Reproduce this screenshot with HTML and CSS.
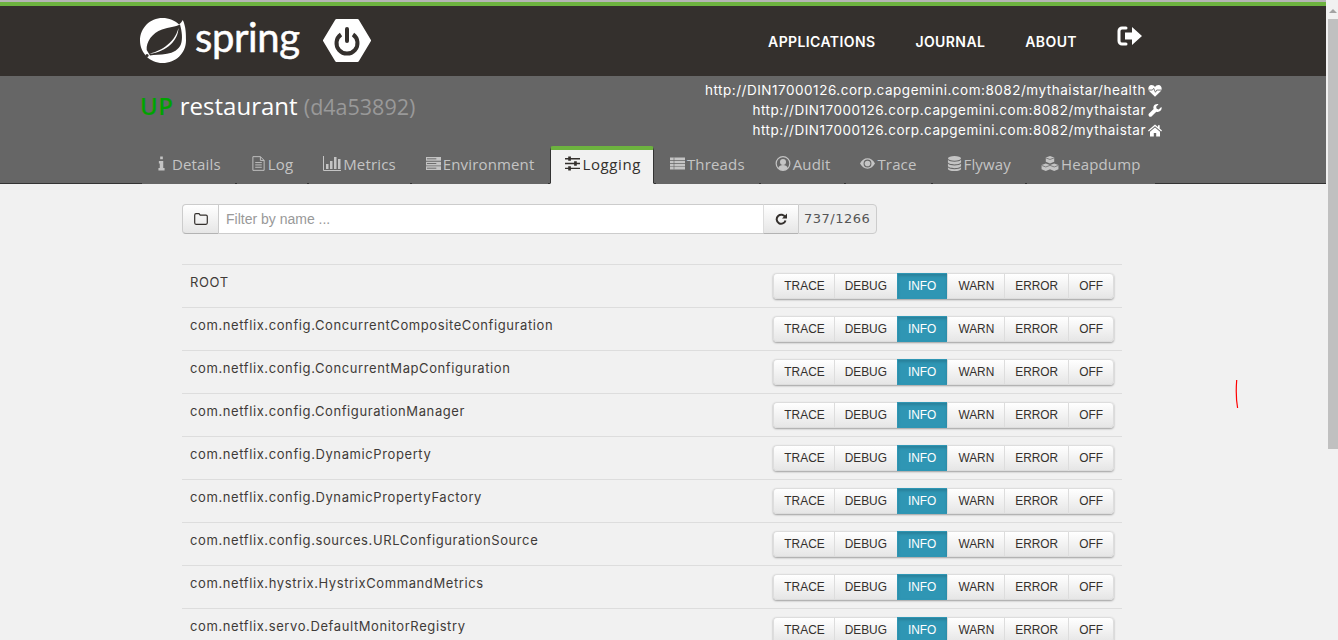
FILE: index.html
```html
<!DOCTYPE html>
<html lang="en">
<head>
  <meta charset="UTF-8">
  <meta name="viewport" content="width=device-width, initial-scale=1.0">
  <title>Spring Boot Admin</title>
  <link rel="stylesheet" href="styles.css">
</head>
<body>
  <svg class="icon-defs" width="0" height="0">
    <symbol id="i-signout" viewBox="0 0 25 20"><path d="M9 2H5a3 3 0 0 0-3 3v10a3 3 0 0 0 3 3h4" fill="none" stroke="currentColor" stroke-width="3" stroke-linecap="round"/><path d="M8 6.500h7V1l10 9-10 9v-5.500H8z" fill="currentColor"/></symbol>
    <symbol id="i-heart" viewBox="0 0 16 14"><path d="M8 14 1.500 7.800C-.5 5.500.2 1 4 .8c1.800 0 3.200 1 4 2.200C8.800 1.800 10.200.8 12 .8c3.800.2 4.500 4.700 2.500 7z" fill="currentColor"/><path d="M1 6.500h4l1.500-2 2 4.500L10 6.500h5" fill="none" stroke="#666" stroke-width="1"/></symbol>
    <symbol id="i-wrench" viewBox="0 0 14 14"><path d="M13.700 3.200 11 5.800 8.800 5 8.200 3l2.600-2.700C8.800-.4 6.300.5 5.500 2.500c-.4 1-.3 2 0 2.800L.6 10.200c-.8.800-.8 2 0 2.900.9.800 2.100.8 2.900 0l4.900-4.800c2.800 1 6-1 5.800-4.200 0-.3-.2-.6-.5-.9z" fill="currentColor"/></symbol>
    <symbol id="i-home" viewBox="0 0 14 12"><path d="M7 0 0 6l.8.900L7 1.700l6.200 5.200L14 6l-2.300-2V.8H10v1.700zM2 7.200V12h3.800V8.500h2.400V12H12V7.200L7 3z" fill="currentColor"/></symbol>
    <symbol id="i-info" viewBox="0 0 8 16"><path d="M2.500 0h3v3h-3zM1 5h5v8h1.500v3h-7v-3H2V8H1z" fill="currentColor"/></symbol>
    <symbol id="i-file" viewBox="0 0 14 16"><path d="M1 .7h8l4 4v10.600H1zM9 .7v4h4" fill="none" stroke="currentColor"/><path d="M3.500 7h7M3.500 9.500h7M3.500 12h7" stroke="currentColor"/></symbol>
    <symbol id="i-chart" viewBox="0 0 18 15"><path d="M.5 0v14.500H18" fill="none" stroke="currentColor"/><path d="M3 8h2.500v5H3zM7 5h2.500v8H7zM11 1h2.500v12H11zM15 3h2.500v10H15z" fill="currentColor"/></symbol>
    <symbol id="i-server" viewBox="0 0 16 14"><path d="M0 0h16v4H0zM0 5h16v4H0zM0 10h16v4H0z" fill="currentColor"/><path d="M1 2h10M1 7h10M1 12h10" stroke="#666"/></symbol>
    <symbol id="i-sliders" viewBox="0 0 14 14"><path d="M0 2.500h14M0 7h14M0 11.500h14" stroke="currentColor" stroke-width="1.300"/><path d="M3 0.500h2.500v4H3zM8.500 5h2.500v4H8.500zM3 9.500h2.500v4H3z" fill="currentColor"/></symbol>
    <symbol id="i-list" viewBox="0 0 15 12"><path d="M0 0h15v2.500H0zM0 3.200h15v2.500H0zM0 6.400h15v2.500H0zM0 9.500h15V12H0z" fill="currentColor"/><path d="M4 0v12" stroke="#666" stroke-width=".6"/></symbol>
    <symbol id="i-user" viewBox="0 0 16 16"><circle cx="8" cy="8" r="7.300" fill="none" stroke="currentColor" stroke-width="1.300"/><circle cx="8" cy="6.300" r="3.200" fill="currentColor"/><path d="M2.800 13c.8-2.600 2.800-3.500 5.200-3.500s4.400.9 5.200 3.500A7 7 0 0 1 8 15.200 7 7 0 0 1 2.800 13z" fill="currentColor"/></symbol>
    <symbol id="i-eye" viewBox="0 0 16 11"><path d="M8 0C4.500 0 1.800 2.200 0 5.500 1.800 8.800 4.500 11 8 11s6.200-2.200 8-5.500C14.200 2.200 11.500 0 8 0zm0 9.700a4.200 4.200 0 1 1 0-8.400 4.200 4.200 0 0 1 0 8.400z" fill="currentColor"/><circle cx="8" cy="5.500" r="3" fill="currentColor"/></symbol>
    <symbol id="i-db" viewBox="0 0 14 16"><ellipse cx="7" cy="2.500" rx="7" ry="2.500" fill="currentColor"/><path d="M0 4v2.500C0 8 3 9 7 9s7-1 7-2.500V4c-1 1.500-4 2-7 2S1 5.500 0 4zM0 8v2.500C0 12 3 13 7 13s7-1 7-2.500V8c-1 1.500-4 2-7 2S1 9.500 0 8zM0 12v1.500C0 15 3 16 7 16s7-1 7-2.500V12c-1 1.500-4 2-7 2s-6-.5-7-2z" fill="currentColor"/></symbol>
    <symbol id="i-cubes" viewBox="0 0 18 16"><path d="M9 0l4.500 1.700v4.500L9 8 4.500 6.200V1.700zM4.500 8 9 9.700v4.500L4.500 16 0 14.200V9.700zM13.500 8 18 9.700v4.500L13.500 16 9 14.200V9.700z" fill="currentColor"/><path d="M4.500 2 9 3.700l4.500-1.700M0 10l4.500 1.700L9 10l4.500 1.700L18 10" fill="none" stroke="#666" stroke-width=".8"/></symbol>
    <symbol id="i-folder" viewBox="0 0 14 12"><path d="M.7 2.200c0-.8.5-1.500 1.300-1.500h3l1.200 1.500H12c.8 0 1.300.6 1.300 1.300v6.300c0 .8-.5 1.500-1.300 1.500H2c-.8 0-1.300-.7-1.300-1.500z" fill="none" stroke="currentColor" stroke-width="1.200"/></symbol>
    <symbol id="i-refresh" viewBox="0 0 12 12"><path d="M10.200 4.200A4.500 4.500 0 1 0 10.500 7.500" fill="none" stroke="currentColor" stroke-width="2"/><path d="M12 .5V5.500H7z" fill="currentColor"/></symbol>
  </svg>

  <div class="page">
    <div class="viewport">
      <header class="navbar">
        <div class="navbar-inner">
          <a class="brand" href="#">
            <svg class="spring-leaf" viewBox="0 0 46 46" width="46" height="46">
              <path d="M22.500 0C29 0 35 2.500 39 6.500c1.600-1.200 2.800-2.800 3.800-4.500C46 9 46 16 46 22.500 46 35 36 45 22.500 45 10 45 0 35 0 22.500S10 0 22.500 0z" fill="#fff"/>
              <path d="M6.700 32C6 24 12 15 22 11.500 29 9 35.500 9 40 6.500c2 7 2.800 14.500 1 19.500-2 5.500-8 9-14 9.800C20 37 14 36.500 10 37.500z" fill="#34302d"/>
              <path d="M9 36C18 33.500 34 27 38.500 10 38 22 28 33.500 9 36z" fill="#fff"/>
              <circle cx="7" cy="37.500" r="1.600" fill="#34302d"/>
            </svg>
            <span class="brand-name">spring</span>
            <svg class="boot-hex" viewBox="0 0 48 43" width="48" height="43">
              <path d="M13.500 1.500h21L46.500 21.500 34.500 41.500h-21L1.500 21.500z" fill="#fff" stroke="#fff" stroke-width="3" stroke-linejoin="round"/>
              <path d="M18 15.500a10.500 10.500 0 1 0 12 0" fill="none" stroke="#34302d" stroke-width="4"/>
              <path d="M24 10v12" stroke="#34302d" stroke-width="4" stroke-linecap="round"/>
            </svg>
          </a>
          <nav class="main-nav">
            <a href="#">APPLICATIONS</a>
            <a href="#">JOURNAL</a>
            <a href="#">ABOUT</a>
            <a class="logout" href="#"><svg class="logout-icon"><use href="#i-signout"/></svg></a>
          </nav>
        </div>
      </header>

      <section class="app-head">
        <div class="app-head-inner">
          <div class="app-info">
            <h1 class="app-title"><span class="status-up">UP</span> restaurant <small>(d4a53892)</small></h1>
            <ul class="app-urls">
              <li>http://DIN17000126.corp.capgemini.com:8082/mythaistar/health<svg class="url-icon"><use href="#i-heart"/></svg></li>
              <li>http://DIN17000126.corp.capgemini.com:8082/mythaistar<svg class="url-icon"><use href="#i-wrench"/></svg></li>
              <li>http://DIN17000126.corp.capgemini.com:8082/mythaistar<svg class="url-icon"><use href="#i-home"/></svg></li>
            </ul>
          </div>
          <ul class="tabs">
            <li class="tab tab-details"><svg class="tab-icon icon-info"><use href="#i-info"/></svg>Details</li>
            <li class="tab"><svg class="tab-icon"><use href="#i-file"/></svg>Log</li>
            <li class="tab"><svg class="tab-icon icon-wide"><use href="#i-chart"/></svg>Metrics</li>
            <li class="tab"><svg class="tab-icon"><use href="#i-server"/></svg>Environment</li>
            <li class="tab active"><svg class="tab-icon"><use href="#i-sliders"/></svg>Logging</li>
            <li class="tab"><svg class="tab-icon"><use href="#i-list"/></svg>Threads</li>
            <li class="tab"><svg class="tab-icon icon-user"><use href="#i-user"/></svg>Audit</li>
            <li class="tab"><svg class="tab-icon"><use href="#i-eye"/></svg>Trace</li>
            <li class="tab"><svg class="tab-icon"><use href="#i-db"/></svg>Flyway</li>
            <li class="tab"><svg class="tab-icon icon-wide"><use href="#i-cubes"/></svg>Heapdump</li>
          </ul>
        </div>
      </section>

      <main class="content">
        <div class="filter-bar">
          <button class="addon-btn folder-btn"><svg class="btn-icon"><use href="#i-folder"/></svg></button>
          <input class="filter-input" type="text" placeholder="Filter by name ...">
          <button class="addon-btn refresh-btn"><svg class="btn-icon"><use href="#i-refresh"/></svg></button>
          <span class="filter-count">737/1266</span>
        </div>

        <div class="logger-list">
          <div class="logger-row">
            <span class="logger-name">ROOT</span>
            <div class="btn-group"><button>TRACE</button><button>DEBUG</button><button class="on">INFO</button><button>WARN</button><button>ERROR</button><button>OFF</button></div>
          </div>
          <div class="logger-row">
            <span class="logger-name">com.netflix.config.ConcurrentCompositeConfiguration</span>
            <div class="btn-group"><button>TRACE</button><button>DEBUG</button><button class="on">INFO</button><button>WARN</button><button>ERROR</button><button>OFF</button></div>
          </div>
          <div class="logger-row">
            <span class="logger-name">com.netflix.config.ConcurrentMapConfiguration</span>
            <div class="btn-group"><button>TRACE</button><button>DEBUG</button><button class="on">INFO</button><button>WARN</button><button>ERROR</button><button>OFF</button></div>
          </div>
          <div class="logger-row">
            <span class="logger-name">com.netflix.config.ConfigurationManager</span>
            <div class="btn-group"><button>TRACE</button><button>DEBUG</button><button class="on">INFO</button><button>WARN</button><button>ERROR</button><button>OFF</button></div>
          </div>
          <div class="logger-row">
            <span class="logger-name">com.netflix.config.DynamicProperty</span>
            <div class="btn-group"><button>TRACE</button><button>DEBUG</button><button class="on">INFO</button><button>WARN</button><button>ERROR</button><button>OFF</button></div>
          </div>
          <div class="logger-row">
            <span class="logger-name">com.netflix.config.DynamicPropertyFactory</span>
            <div class="btn-group"><button>TRACE</button><button>DEBUG</button><button class="on">INFO</button><button>WARN</button><button>ERROR</button><button>OFF</button></div>
          </div>
          <div class="logger-row">
            <span class="logger-name">com.netflix.config.sources.URLConfigurationSource</span>
            <div class="btn-group"><button>TRACE</button><button>DEBUG</button><button class="on">INFO</button><button>WARN</button><button>ERROR</button><button>OFF</button></div>
          </div>
          <div class="logger-row">
            <span class="logger-name">com.netflix.hystrix.HystrixCommandMetrics</span>
            <div class="btn-group"><button>TRACE</button><button>DEBUG</button><button class="on">INFO</button><button>WARN</button><button>ERROR</button><button>OFF</button></div>
          </div>
          <div class="logger-row">
            <span class="logger-name">com.netflix.servo.DefaultMonitorRegistry</span>
            <div class="btn-group"><button>TRACE</button><button>DEBUG</button><button class="on">INFO</button><button>WARN</button><button>ERROR</button><button>OFF</button></div>
          </div>
        </div>

        <svg class="pen-mark" viewBox="0 0 4 30" width="4" height="30"><path d="M1.700 1C1 10 1 20 2.600 29" fill="none" stroke="#f00" stroke-width="1.200"/></svg>
      </main>
    </div>

    <div class="scrollbar">
      <div class="scroll-up"></div>
      <div class="scroll-thumb"></div>
    </div>
  </div>
</body>
</html>
```

FILE: styles.css
```css
* {
    box-sizing: border-box;
}

html, body {
    height: 100%;
    margin: 0;
    overflow: hidden;
}

body {
    background-color: #f1f1f1;
    color: #34302d;
    font-family: "Inter", "Liberation Sans", sans-serif;
}

a {
    color: inherit;
    text-decoration: none;
}

ul {
    list-style: none;
    margin: 0;
    padding: 0;
}

.icon-defs {
    position: absolute;
}

.page {
    display: flex;
    height: 640px;
}

.viewport {
    position: relative;
    width: 1326px;
    height: 640px;
    overflow: hidden;
    border-top: 2px solid #b5b5b5;
}

/* top bar */
.navbar {
    height: 74px;
    border-top: 4px solid #6db33f;
    background-color: #34302d;
}

.navbar-inner {
    display: flex;
    justify-content: space-between;
    width: 1022px;
    margin-left: 140px;
}

.brand {
    display: flex;
    align-items: flex-start;
    padding-top: 12px;
}

.brand-name {
    margin: -6px 0 0 9px;
    color: #fff;
    font-family: "Lato", sans-serif;
    font-size: 40px;
    line-height: 50px;
    letter-spacing: -0.4px;
    -webkit-text-stroke: 0.5px #fff;
}

.boot-hex {
    margin: 1px 0 0 23px;
}

.main-nav {
    display: flex;
    gap: 40px;
    margin-right: 20px;
    padding-top: 27px;
    color: #fff;
    font-size: 14px;
    font-weight: 600;
    line-height: 18px;
    letter-spacing: 0.4px;
}

.logout-icon {
    display: block;
    width: 25px;
    height: 20px;
    margin-top: -7px;
}

/* application header */
.app-head {
    height: 108px;
    border-bottom: 1px solid #333;
    background-color: #666;
}

.app-head-inner {
    width: 1022px;
    margin-left: 140px;
}

.app-info {
    display: flex;
    justify-content: space-between;
    height: 70px;
    padding-top: 4px;
}

.app-title {
    margin: 11px 0 0;
    color: #fff;
    font-family: "Open Sans", sans-serif;
    font-size: 24px;
    font-weight: 400;
    line-height: 30px;
}

.status-up {
    color: #00a300;
    font-weight: 600;
    letter-spacing: 0.5px;
}

.app-title small {
    color: #999;
    font-size: 21.5px;
}

.app-urls {
    color: #fff;
    font-size: 13.5px;
    line-height: 20px;
    letter-spacing: 0.52px;
    text-align: right;
}

.url-icon {
    display: inline-block;
    width: 14px;
    height: 13px;
    margin-left: 2px;
    vertical-align: -2px;
    color: #fff;
}

.tabs {
    display: flex;
    gap: 2px;
    height: 38px;
    color: #c4c4c4;
    font-family: "Open Sans", sans-serif;
    font-size: 15px;
    letter-spacing: 0.15px;
}

.tab {
    display: flex;
    align-items: center;
    height: 38px;
    padding: 0 14px 2px;
    border-bottom: 1px solid #666;
    white-space: nowrap;
}

.tab-details {
    margin-left: 2px;
    padding-left: 16px;
}

.tab.active {
    padding: 0 12px 6px 14px;
    border: 1px solid #333;
    border-top: 4px solid #6db33f;
    border-bottom: 1px solid #f1f1f1;
    border-radius: 3px 3px 0 0;
    background-color: #f1f1f1;
    color: #34302d;
    letter-spacing: 0.6px;
}

.tab-icon {
    flex: none;
    width: 15px;
    height: 15px;
    margin-right: 2px;
}

.tab-icon.icon-info {
    width: 7px;
    margin-right: 7px;
}

.tab-icon.icon-user {
    width: 16px;
}

.tab-icon.icon-wide {
    width: 18px;
}

/* content */
.content {
    width: 940px;
    margin-left: 182px;
    padding-top: 20px;
}

.filter-bar {
    display: flex;
    height: 30px;
}

.addon-btn {
    height: 30px;
    padding: 0;
    border: 1px solid #ccc;
    border-bottom-color: #b3b3b3;
    background-image: linear-gradient(#fff, #e6e6e6);
    color: #34302d;
}

.folder-btn {
    width: 37px;
    border-radius: 4px 0 0 4px;
}

.refresh-btn {
    width: 35px;
    border-left: 1px solid #ddd;
    border-right: 0;
}

.btn-icon {
    display: block;
    width: 14px;
    height: 12px;
    margin: 0 auto;
}

.filter-input {
    width: 544px;
    height: 30px;
    padding: 4px 7px;
    border: 1px solid #ccc;
    border-left: 0;
    border-right: 0;
    background-color: #fff;
    font-family: "Liberation Sans", sans-serif;
    font-size: 14px;
}

.filter-input::placeholder {
    color: #999;
}

.filter-count {
    width: 79px;
    height: 30px;
    padding: 0 5px;
    border: 1px solid #ccc;
    border-radius: 0 4px 4px 0;
    background-color: #eee;
    color: #555;
    font-family: "DejaVu Sans", sans-serif;
    font-size: 13px;
    line-height: 28px;
    letter-spacing: 0.5px;
}

.logger-list {
    margin-top: 30px;
}

.logger-row {
    display: flex;
    justify-content: space-between;
    height: 43px;
    padding: 8px;
    border-top: 1px solid #ddd;
}

.logger-name {
    margin-top: -1px;
    color: #3f3b38;
    font-size: 13px;
    line-height: 20px;
    letter-spacing: 0.6px;
}

.btn-group {
    display: flex;
    height: 26px;
    border-radius: 4px;
    box-shadow: 0 1px 2px rgba(0, 0, 0, 0.35);
}

.btn-group button {
    height: 26px;
    padding: 0 10px;
    border: 1px solid #ddd;
    border-right: 0;
    background-image: linear-gradient(#fff, #e6e6e6);
    color: #34302d;
    font-family: "Liberation Sans", sans-serif;
    font-size: 11.9px;
}

.btn-group button:first-child {
    padding-right: 9px;
    border-radius: 4px 0 0 4px;
}

.btn-group button:last-child {
    border-right: 1px solid #ddd;
    border-radius: 0 4px 4px 0;
}

.btn-group button.on {
    padding: 0 11px 0 10px;
    border-color: #2f96b4;
    background-image: none;
    background-color: #2f96b4;
    box-shadow: inset 0 2px 3px rgba(0, 0, 0, 0.15);
    color: #fff;
}

.pen-mark {
    position: absolute;
    left: 1235px;
    top: 377px;
}

/* fake window scrollbar */
.scrollbar {
    flex: none;
    width: 12px;
    height: 640px;
    padding-left: 2px;
    background-color: #f1f1f1;
}

.scroll-up {
    width: 0;
    margin: 9px auto 0;
    border: 4px solid transparent;
    border-top: 0;
    border-bottom: 4px solid #a3a3a3;
}

.scroll-thumb {
    height: 430px;
    margin-top: 6px;
    background-color: #c0c0c0;
}
```
